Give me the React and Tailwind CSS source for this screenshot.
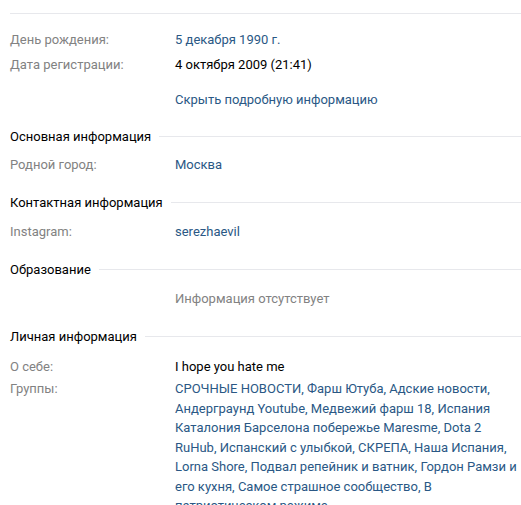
function Row({ label, children, className = '', valueClass = 'text-[#2a5885]' }) {
    return (
        <div className={`flex ${className}`}>
            <div className="w-[165px] shrink-0 text-[#828282]">{label}</div>
            <div className={`flex-1 pr-[2px] ${valueClass}`}>{children}</div>
        </div>
    );
}

function Heading({ title, className = '' }) {
    return (
        <div className={`flex items-center gap-[8px] text-black ${className}`}>
            <span className="whitespace-nowrap">{title}</span>
            <div className="h-px flex-1 bg-[#e7e8ec]" />
        </div>
    );
}

export default function App() {
    return (
        <div className="w-[521px] h-[505px] overflow-hidden bg-white pl-[10px] font-['Roboto',sans-serif] text-[13px] leading-[19.5px]">
            <div className="mt-[13px] h-px bg-[#e7e8ec]" />

            {/* Short info */}
            <Row label="День рождения:" className="mt-[16px]">5 декабря 1990 г.</Row>
            <Row label="Дата регистрации:" className="mt-[5px]" valueClass="text-black">
                4 октября 2009 (21:41)
            </Row>
            <div className="mt-[16px] pl-[165px] text-[#2a5885]">Скрыть подробную информацию</div>

            {/* Основная информация */}
            <Heading title="Основная информация" className="mt-[17.5px]" />
            <Row label="Родной город:" className="mt-[8.5px]">Москва</Row>

            {/* Контактная информация */}
            <Heading title="Контактная информация" className="mt-[18.5px]" />
            <Row label="Instagram:" className="mt-[9.5px]">serezhaevil</Row>

            {/* Образование */}
            <Heading title="Образование" className="mt-[18.5px]" />
            <Row label="" className="mt-[9.5px]" valueClass="text-[#828282]">Информация отсутствует</Row>

            {/* Личная информация */}
            <Heading title="Личная информация" className="mt-[18.5px]" />
            <Row label="О себе:" className="mt-[10.5px]" valueClass="text-black">I hope you hate me</Row>
            <Row label="Группы:" className="mt-[2.5px]">
                СРОЧНЫЕ НОВОСТИ, Фарш Ютуба, Адские новости, Андерграунд Youtube, Медвежий фарш 18, Испания
                Каталония Барселона побережье Maresme, Dota 2 RuHub, Испанский с улыбкой, СКРЕПА, Наша Испания,
                Lorna Shore, Подвал репейник и ватник, Гордон Рамзи и его кухня, Самое страшное сообщество, В
                патриотическом режиме
            </Row>
        </div>
    );
}
